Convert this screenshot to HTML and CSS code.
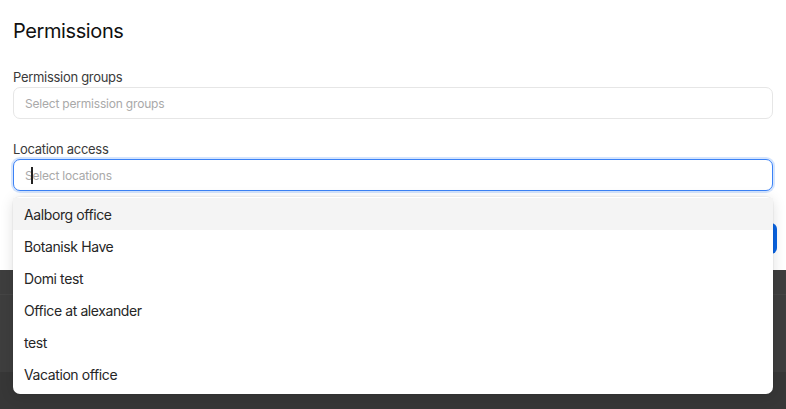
FILE: index.html
```html
<!DOCTYPE html>
<html lang="en">
<head>
<meta charset="utf-8">
<title>Permissions</title>
<link rel="stylesheet" href="styles.css">
</head>
<body>
<div class="page">
  <section class="modal">
    <h2 class="title">Permissions</h2>
    <div class="field">
      <label class="label">Permission groups</label>
      <div class="select"><span class="placeholder">Select permission groups</span></div>
    </div>
    <div class="field field-second">
      <label class="label">Location access</label>
      <div class="select is-focused">
        <span class="caret"></span>
        <span class="placeholder">Select locations</span>
        <ul class="menu">
          <li class="option is-active">Aalborg office</li>
          <li class="option">Botanisk Have</li>
          <li class="option">Domi test</li>
          <li class="option">Office at alexander</li>
          <li class="option">test</li>
          <li class="option">Vacation office</li>
        </ul>
      </div>
    </div>
    <div class="footer"><button class="btn-primary">Save</button></div>
  </section>
  <div class="backdrop">
    <div class="band band-top"></div>
    <div class="band band-mid"></div>
    <div class="band band-bottom"></div>
  </div>
</div>
</body>
</html>
```

FILE: styles.css
```css
* { box-sizing: border-box; }
html, body { margin: 0; padding: 0; }
body {
  font-family: Inter, "Noto Sans", sans-serif;
  background: #3d3d3d;
  width: 786px;
  height: 409px;
  overflow: hidden;
}
.page { display: flex; flex-direction: column; height: 409px; }
.modal {
  background: #fff;
  padding: 19px 13px 16px 13px;
  height: 270px;
  flex: none;
}
.title {
  margin: 0;
  font-size: 20px;
  line-height: 24px;
  font-weight: 400;
  color: #111;
  letter-spacing: -0.4px;
}
.field { display: flex; flex-direction: column; gap: 2px; margin-top: 26px; }
.field-second { margin-top: 22px; }
.label {
  font-size: 13px;
  line-height: 16px;
  color: #3a3a3a;
  letter-spacing: -0.3px;
}
.select {
  position: relative;
  height: 32px;
  border: 1px solid #e6e6e6;
  border-radius: 7px;
  display: flex;
  align-items: center;
  padding-left: 11px;
  background: #fff;
}
.select.is-focused {
  border-color: #3b82f6;
  box-shadow: 0 0 0 2px rgba(59,130,246,0.22);
}
.placeholder {
  font-size: 12px;
  color: #a9a9a9;
  letter-spacing: -0.2px;
}
.caret {
  position: absolute;
  left: 17px;
  top: 7px;
  width: 1.5px;
  height: 17px;
  background: #222;
}
.menu {
  position: absolute;
  left: -1px;
  right: -1px;
  top: calc(100% + 7px);
  margin: 0;
  padding: 1px 0 4px 0;
  list-style: none;
  background: #fff;
  border-radius: 7px;
  box-shadow: 0 2px 14px rgba(0,0,0,0.13), 0 0 0 1px rgba(0,0,0,0.03);
  z-index: 5;
}
.option {
  height: 32px;
  display: flex;
  align-items: center;
  padding-left: 11px;
  padding-top: 1px;
  font-size: 14px;
  color: #262626;
  letter-spacing: -0.4px;
}
.option.is-active { background: #f4f4f4; }
.footer {
  display: flex;
  justify-content: flex-end;
  margin-top: 32px;
  margin-right: -4px;
}
.btn-primary {
  height: 31px;
  width: 70px;
  border: none;
  border-radius: 6px;
  background: #0a64e2;
  color: #fff;
  font-family: inherit;
  font-size: 13px;
}
.backdrop { flex: 1; display: flex; flex-direction: column; }
.band-top { height: 25px; border-bottom: 1px solid #454545; background: #3e3e3e; }
.band-mid { height: 77px; background: #3e3e3e; }
.band-bottom { flex: 1; background: #373737; }
```
